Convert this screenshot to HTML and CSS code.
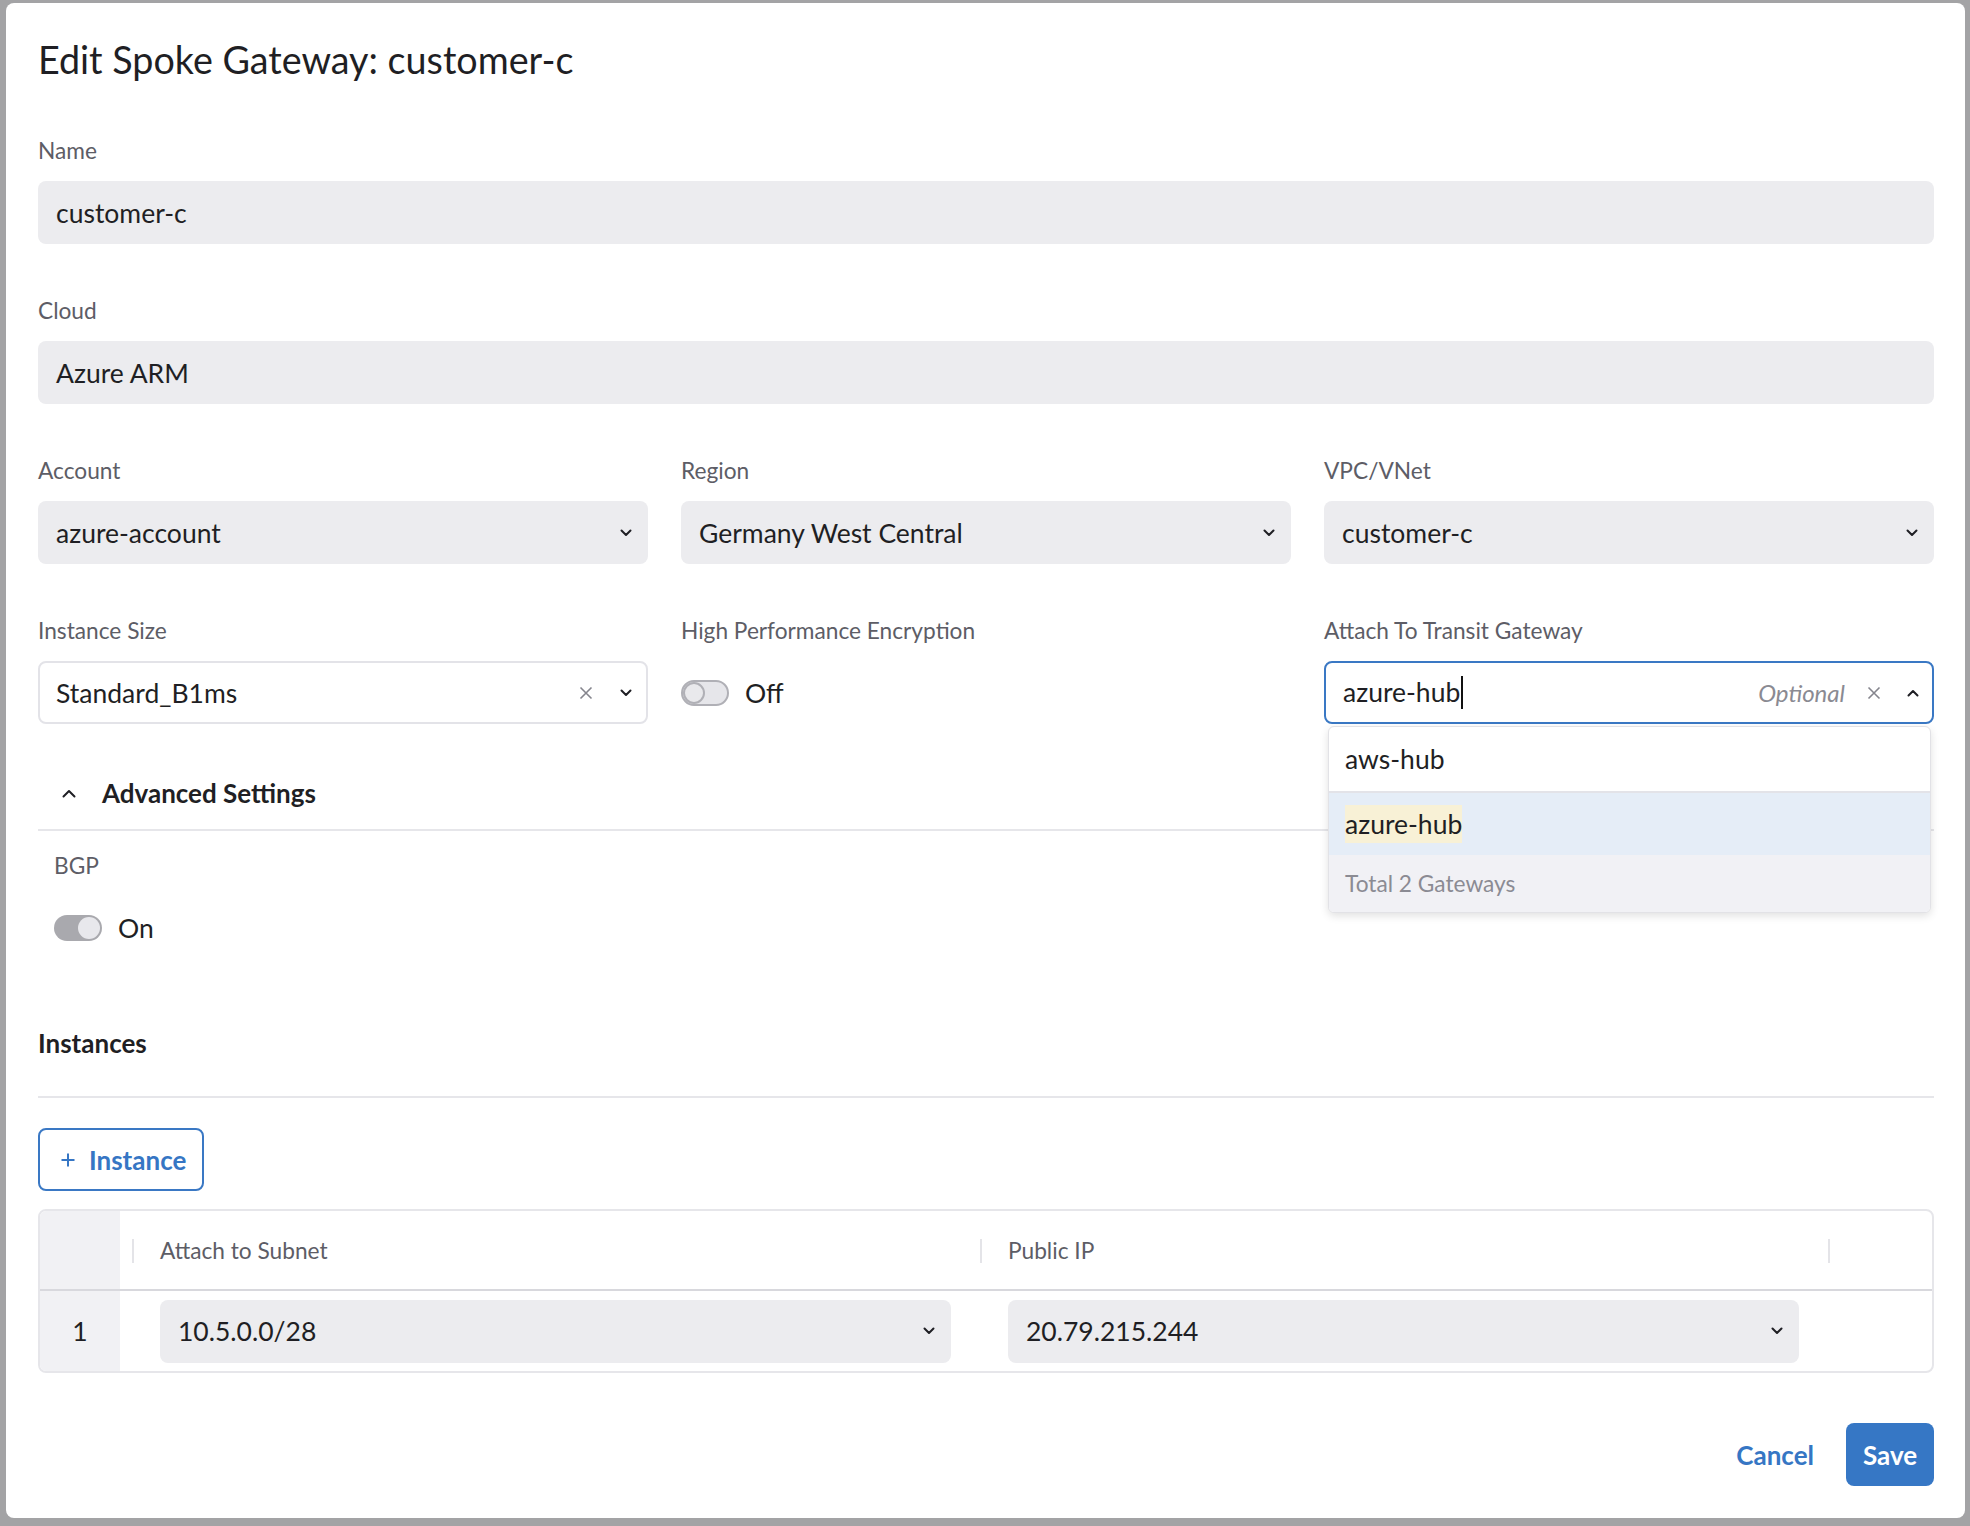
FILE: index.html
```html
<!DOCTYPE html>
<html lang="en">
<head>
<meta charset="utf-8">
<title>Edit Spoke Gateway</title>
<link rel="stylesheet" href="styles.css">
</head>
<body>
<div class="modal">
  <h1 class="modal-title">Edit Spoke Gateway: customer-c</h1>

  <div class="field">
    <label class="field-label">Name</label>
    <div class="control control--filled"><span class="value">customer-c</span></div>
  </div>

  <div class="field field--spaced">
    <label class="field-label">Cloud</label>
    <div class="control control--filled"><span class="value">Azure ARM</span></div>
  </div>

  <div class="grid3">
    <div class="field">
      <label class="field-label">Account</label>
      <div class="control control--filled">
        <span class="value">azure-account</span>
        <svg class="chev" viewBox="0 0 12 8"><path d="M1.5 1.5 6 6l4.5-4.5"/></svg>
      </div>
    </div>
    <div class="field">
      <label class="field-label">Region</label>
      <div class="control control--filled">
        <span class="value">Germany West Central</span>
        <svg class="chev" viewBox="0 0 12 8"><path d="M1.5 1.5 6 6l4.5-4.5"/></svg>
      </div>
    </div>
    <div class="field">
      <label class="field-label">VPC/VNet</label>
      <div class="control control--filled">
        <span class="value">customer-c</span>
        <svg class="chev" viewBox="0 0 12 8"><path d="M1.5 1.5 6 6l4.5-4.5"/></svg>
      </div>
    </div>

    <div class="field">
      <label class="field-label">Instance Size</label>
      <div class="control control--outlined">
        <span class="value">Standard_B1ms</span>
        <svg class="clear" viewBox="0 0 14 14"><path d="M1.5 1.5l11 11M12.5 1.5l-11 11"/></svg>
        <svg class="chev" viewBox="0 0 12 8"><path d="M1.5 1.5 6 6l4.5-4.5"/></svg>
      </div>
    </div>
    <div class="field">
      <label class="field-label">High Performance Encryption</label>
      <div class="control control--bare">
        <span class="toggle toggle--off"><span class="knob"></span></span>
        <span class="toggle-text">Off</span>
      </div>
    </div>
    <div class="field field--combo">
      <label class="field-label">Attach To Transit Gateway</label>
      <div class="control control--focused">
        <span class="value">azure-hub<span class="caret"></span></span>
        <span class="placeholder-hint">Optional</span>
        <svg class="clear" viewBox="0 0 14 14"><path d="M1.5 1.5l11 11M12.5 1.5l-11 11"/></svg>
        <svg class="chev chev--up" viewBox="0 0 12 8"><path d="M1.5 6.5 6 2l4.5 4.5"/></svg>
      </div>
      <div class="menu">
        <div class="menu-option">aws-hub</div>
        <div class="menu-option menu-option--active"><mark class="hl">azure-hub</mark></div>
        <div class="menu-footer">Total 2 Gateways</div>
      </div>
    </div>
  </div>

  <section class="advanced">
    <div class="advanced-head">
      <svg class="adv-chev" viewBox="0 0 14 9"><path d="M1.5 7.5 7 2l5.5 5.5"/></svg>
      <span>Advanced Settings</span>
    </div>
    <div class="advanced-body">
      <div class="field">
        <label class="field-label">BGP</label>
        <div class="control control--bare">
          <span class="toggle toggle--on"><span class="knob"></span></span>
          <span class="toggle-text">On</span>
        </div>
      </div>
    </div>
  </section>

  <section class="instances">
    <h2 class="section-title">Instances</h2>
    <button class="btn-outline" type="button">
      <svg class="plus" viewBox="0 0 14 14"><path d="M7 0.5v13M0.5 7h13"/></svg>
      <span>Instance</span>
    </button>
    <div class="grid-table">
      <div class="gt-row gt-head">
        <div class="gt-idx"></div>
        <div class="gt-cell"><span class="gt-sep"></span>Attach to Subnet</div>
        <div class="gt-cell"><span class="gt-sep"></span>Public IP</div>
        <div class="gt-cell"><span class="gt-sep"></span></div>
      </div>
      <div class="gt-row gt-body">
        <div class="gt-idx">1</div>
        <div class="gt-cell">
          <div class="control control--filled">
            <span class="value">10.5.0.0/28</span>
            <svg class="chev" viewBox="0 0 12 8"><path d="M1.5 1.5 6 6l4.5-4.5"/></svg>
          </div>
        </div>
        <div class="gt-cell">
          <div class="control control--filled">
            <span class="value">20.79.215.244</span>
            <svg class="chev" viewBox="0 0 12 8"><path d="M1.5 1.5 6 6l4.5-4.5"/></svg>
          </div>
        </div>
        <div class="gt-cell"></div>
      </div>
    </div>
  </section>

  <div class="modal-footer">
    <button class="btn-link" type="button">Cancel</button>
    <button class="btn-primary" type="button">Save</button>
  </div>
</div>
</body>
</html>
```

FILE: styles.css
```css
* { box-sizing: border-box; }
html, body { margin: 0; }
body {
  width: 1970px;
  height: 1526px;
  overflow: hidden;
  padding: 3px 5px 8px 6px;
  background: #a3a3a5;
  font-family: Lato, "Noto Sans", sans-serif;
  color: #1f1f24;
}
.modal {
  height: 1515px;
  background: #fff;
  border-radius: 8px;
  padding: 33px 31px 32px 32px;
  display: flex;
  flex-direction: column;
}
.modal-title {
  margin: 0 0 50px;
  font-size: 37.7px;
  line-height: 48px;
  font-weight: 400;
  color: #1f1f24;
}
.field { position: relative; }
.field--spaced { margin-top: 50px; }
.field-label {
  display: block;
  font-size: 22.7px;
  line-height: 34px;
  color: #5d5d66;
  margin-bottom: 13px;
}
.control {
  height: 63px;
  border-radius: 8px;
  display: flex;
  align-items: center;
  padding: 0 16px 0 18px;
  font-size: 26.5px;
  color: #1f1f24;
}
.control .value { flex: 1; white-space: nowrap; }
.control--filled { background: #ececef; }
.control--outlined { background: #fff; border: 2px solid #e3e3e8; padding-left: 16px; padding-right: 14px; }
.control--focused { background: #fff; border: 2px solid #3a78c4; padding-left: 17px; padding-right: 13px; }
.control--bare { padding: 0; gap: 16px; }
.chev { width: 12px; height: 8px; fill: none; stroke: #1f1f24; stroke-width: 2; stroke-linecap: round; stroke-linejoin: round; flex: none; }
.clear { width: 14px; height: 14px; fill: none; stroke: #85858d; stroke-width: 1.6; margin-right: 27px; flex: none; }
.control--focused .clear { margin-left: 22px; margin-right: 26px; }
.placeholder-hint { font-style: italic; color: #8a8a92; font-size: 24px; }
.caret { display: inline-block; width: 2px; height: 33px; background: #111; vertical-align: -7px; margin-left: 1px; }

.grid3 {
  display: grid;
  grid-template-columns: repeat(3, 1fr);
  column-gap: 33px;
  row-gap: 50px;
  margin-top: 50px;
}

.toggle {
  position: relative;
  width: 48px;
  height: 26px;
  border-radius: 13px;
  flex: none;
}
.toggle .knob {
  position: absolute;
  top: 2px;
  width: 22px;
  height: 22px;
  border-radius: 50%;
}
.toggle--off { background: #e6e6ea; border: 2px solid #b0b0b6; }
.toggle--off .knob { top: 0; left: 0; width: 22px; height: 22px; background: #e9e9ec; border: 2px solid #b0b0b6; }
.toggle--on { background: #a9a9ae; }
.toggle--on .knob { right: 2px; background: #e8e8ec; }
.toggle-text { font-size: 26.5px; }

.menu {
  position: absolute;
  left: 4px;
  right: 3px;
  top: calc(100% + 2px);
  background: #fff;
  border: 1px solid #e2e2e6;
  border-radius: 6px;
  box-shadow: 0 3px 8px rgba(0,0,0,0.12);
  overflow: hidden;
  z-index: 5;
}
.menu-option {
  height: 64px;
  display: flex;
  align-items: center;
  padding-left: 16px;
  font-size: 26.5px;
  color: #1f1f24;
}
.menu-option--active { background: #e5edf7; border-top: 2px solid #e3e3e8; }
.hl { background: #f8f1d6; color: inherit; padding: 3px 0; }
.menu-footer {
  height: 57px;
  display: flex;
  align-items: center;
  padding-left: 16px;
  font-size: 22.7px;
  color: #8b8b93;
  background: #f1f1f5;
}

.advanced { margin-top: 51px; }
.advanced-head {
  display: flex;
  align-items: center;
  gap: 26px;
  padding: 0 0 18px 24px;
  border-bottom: 2px solid #e6e6ea;
  font-size: 26px;
  line-height: 36px;
  font-weight: 700;
  color: #1f1f24;
}
.adv-chev { width: 14px; height: 9px; fill: none; stroke: #1f1f24; stroke-width: 2; stroke-linecap: round; stroke-linejoin: round; }
.advanced-body { padding: 18px 0 0 16px; }

.instances { margin-top: 66px; }
.section-title {
  margin: 0;
  font-size: 26px;
  line-height: 36px;
  font-weight: 700;
  padding-bottom: 35px;
  border-bottom: 2px solid #e6e6ea;
}
.btn-outline {
  margin-top: 30px;
  height: 63px;
  width: 166px;
  display: flex;
  align-items: center;
  gap: 14px;
  padding: 0 0 0 21px;
  border: 2px solid #3a78c4;
  border-radius: 8px;
  background: #fff;
  color: #3676c4;
  font-family: inherit;
  font-size: 26px;
  font-weight: 700;
}
.plus { width: 14px; height: 14px; fill: none; stroke: #3676c4; stroke-width: 2; }

.grid-table {
  margin-top: 18px;
  border: 2px solid #e6e6ea;
  border-radius: 8px;
  overflow: hidden;
}
.gt-row { display: grid; grid-template-columns: 80px 848px 848px 1fr; }
.gt-head { height: 80px; border-bottom: 2px solid #d8d8dd; }
.gt-body { height: 80px; }
.gt-idx { background: #f1f1f4; display: flex; align-items: center; justify-content: center; font-size: 26.5px; }
.gt-cell { position: relative; display: flex; align-items: center; padding: 0 17px 0 40px; }
.gt-head .gt-cell { font-size: 22.7px; color: #5d5d66; }
.gt-body .gt-cell .control { width: 100%; }
.gt-sep { position: absolute; left: 12px; top: 28px; width: 2px; height: 24px; background: #e4e4e8; }

.modal-footer {
  margin-top: auto;
  display: flex;
  justify-content: flex-end;
  align-items: center;
  gap: 32px;
}
.btn-link {
  border: 0;
  background: none;
  padding: 0;
  font-family: inherit;
  font-size: 26px;
  font-weight: 700;
  color: #3676c4;
}
.btn-primary {
  height: 63px;
  width: 88px;
  border: 0;
  border-radius: 8px;
  background: #3677c5;
  color: #fff;
  font-family: inherit;
  font-size: 26px;
  font-weight: 700;
}
```
